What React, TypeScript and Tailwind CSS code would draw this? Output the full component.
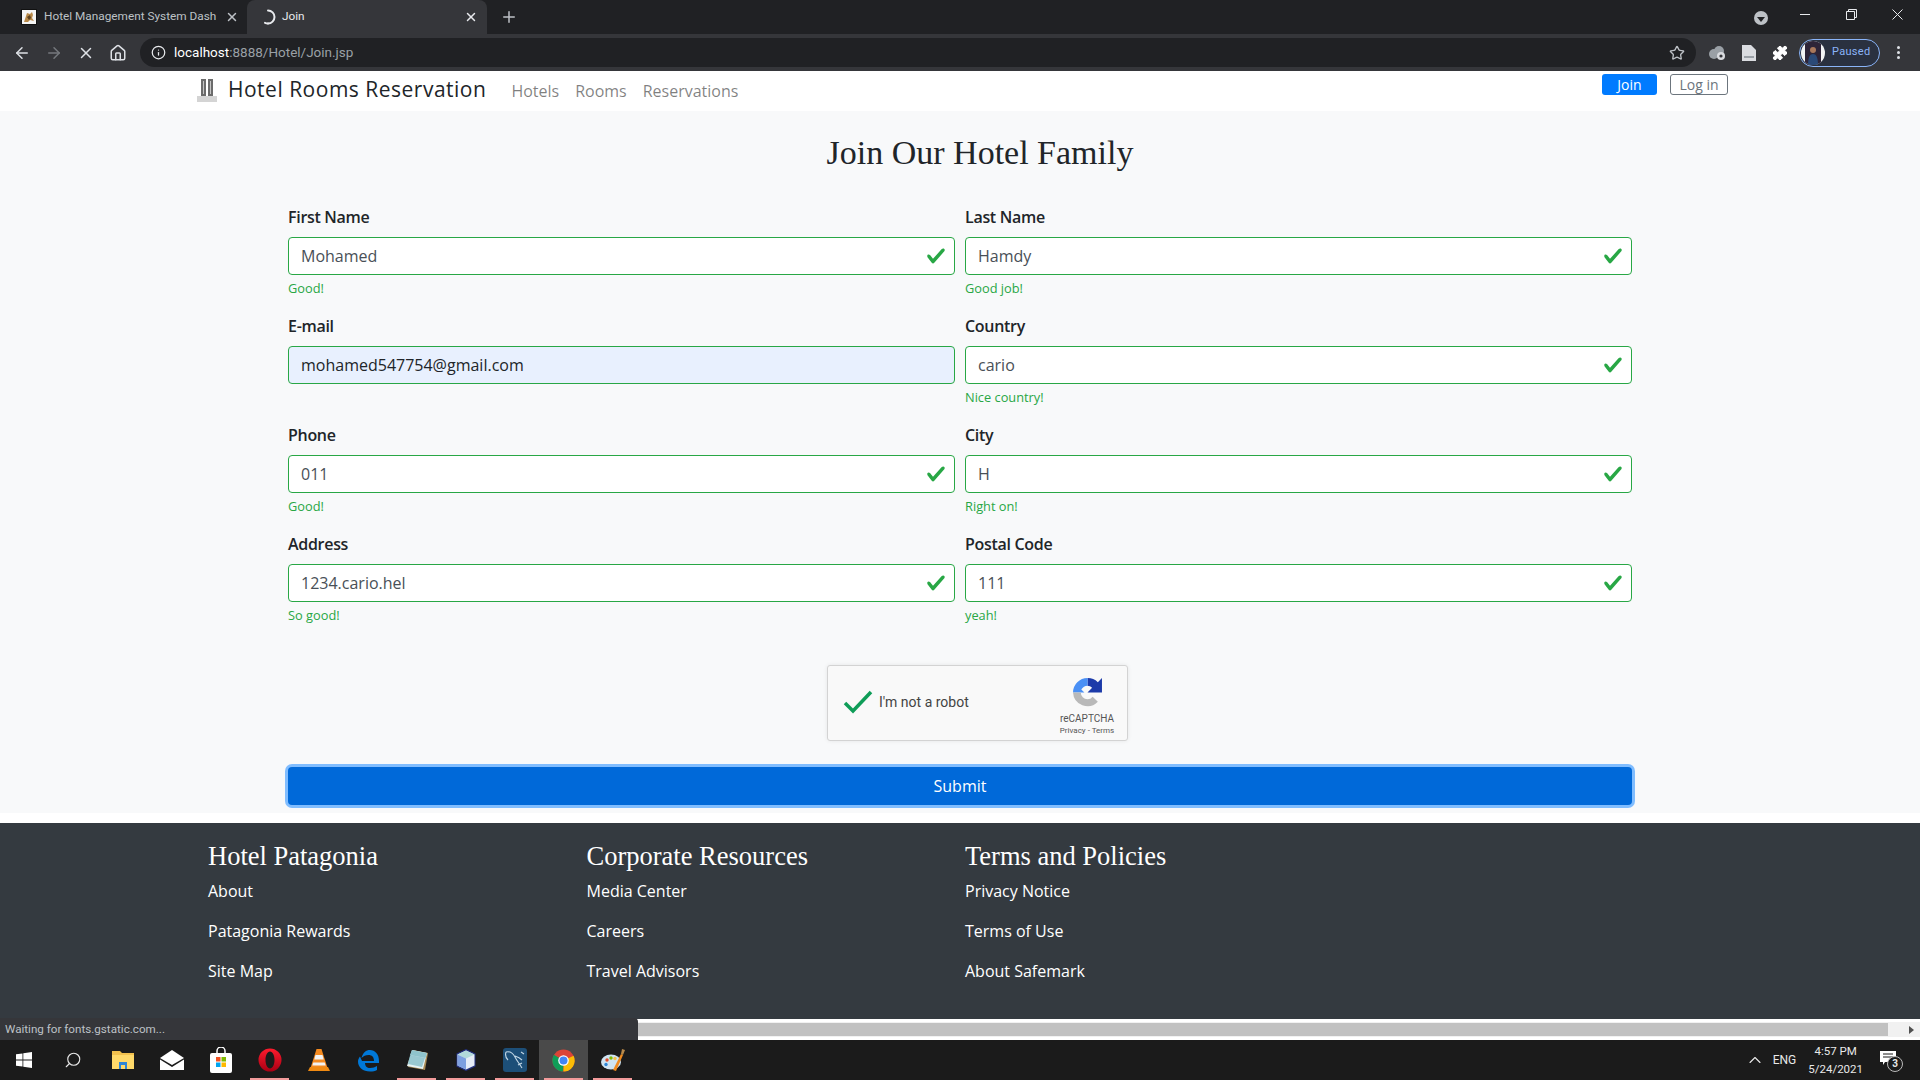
import { ArrowLeft, ArrowRight, ChevronUp, Home as HomeIcon, Info, Plus, Puzzle, Search, Star, X } from 'lucide-react';

const fields = [
  { label: 'First Name', value: 'Mohamed', note: 'Good!' },
  { label: 'Last Name', value: 'Hamdy', note: 'Good job!' },
  { label: 'E-mail', value: 'mohamed547754@gmail.com', note: '', autofill: true },
  { label: 'Country', value: 'cario', note: 'Nice country!' },
  { label: 'Phone', value: '011', note: 'Good!' },
  { label: 'City', value: 'H', note: 'Right on!' },
  { label: 'Address', value: '1234.cario.hel', note: 'So good!' },
  { label: 'Postal Code', value: '111', note: 'yeah!' },
];

const footerColumns = [
  { title: 'Hotel Patagonia', links: ['About', 'Patagonia Rewards', 'Site Map'] },
  { title: 'Corporate Resources', links: ['Media Center', 'Careers', 'Travel Advisors'] },
  { title: 'Terms and Policies', links: ['Privacy Notice', 'Terms of Use', 'About Safemark'] },
];

function ValidCheck() {
  return (
    <svg viewBox="0 0 8 8" className="absolute right-[9px] top-[9px] h-5 w-5 text-[#28a745]">
      <path
        fill="currentColor"
        d="M2.3 6.73L.6 4.53c-.4-1.04.46-1.4 1.1-.8l1.1 1.4 3.4-3.8c.6-.63 1.6-.27 1.2.7l-4 4.6c-.43.5-.8.4-1.1.1z"
      />
    </svg>
  );
}

function Field({ label, value, note, autofill }: { label: string; value: string; note: string; autofill?: boolean }) {
  return (
    <div className="h-[109px]">
      <label className="mb-2 block text-base leading-6 font-semibold tracking-[-0.3px] text-[#212529]">{label}</label>
      <div className="relative h-[38px]">
        <input
          readOnly
          value={value}
          className={`h-[38px] w-full rounded border border-[#28a745] px-3 text-base ${
            autofill ? 'bg-[#e8f0fe] text-[#212529]' : 'bg-white text-[#495057]'
          }`}
        />
        {!autofill && <ValidCheck />}
      </div>
      {note && <div className="mt-1 text-[12.8px] leading-[19px] text-[#28a745]">{note}</div>}
    </div>
  );
}

function Tabs() {
  return (
    <div className="flex h-[34px] items-end bg-[#202124] text-[11.8px] font-['Roboto',sans-serif]">
      <div className="flex h-[34px] w-[247px] items-center pl-[21px] text-[#bdc1c6]">
        <svg viewBox="0 0 16 16" className="h-4 w-4 shrink-0">
          <rect width="16" height="16" fill="#111" />
          <rect x="1" y="1" width="14" height="14" fill="#f5f5f5" />
          <path d="M3 13l2-6 1-3 3 1 2-2 1 3-1 3 2 3-4-1-2 2z" fill="#b98a4a" />
          <path d="M6 8l3-2 1 3-2 2z" fill="#5f4320" />
        </svg>
        <span className="ml-[7px] w-[177px] whitespace-nowrap">Hotel Management System Dash</span>
        <X className="ml-[4px] h-[14px] w-[14px] shrink-0" strokeWidth={2.5} />
      </div>
      <div className="flex h-[34px] w-[240px] items-center rounded-t-lg bg-[#35363a] pl-[13px] text-[#e8eaed]">
        <svg viewBox="0 0 16 16" className="h-4 w-4 shrink-0 text-[#e8eaed]">
          <path d="M8 1.5a6.5 6.5 0 0 1 0 13" fill="none" stroke="currentColor" strokeWidth="2" strokeLinecap="round" />
          <path d="M8 14.5a6.5 6.5 0 0 1-3-.7" fill="none" stroke="currentColor" strokeWidth="2" strokeLinecap="round" />
        </svg>
        <span className="ml-[6px] w-[182px]">Join</span>
        <X className="h-[14px] w-[14px] shrink-0" strokeWidth={2.5} />
      </div>
      <div className="flex h-[34px] w-[44px] items-center justify-center text-[#bdc1c6]">
        <Plus className="h-[18px] w-[18px]" strokeWidth={2} />
      </div>
      <div className="flex-1" />
      <div className="flex h-[34px] items-center text-[#e8eaed]">
        <div className="mt-[2px] mr-[32px] flex h-[14px] w-[14px] items-center justify-center rounded-full bg-[#bdc1c6]">
          <div className="mt-[2px] h-0 w-0 border-x-[4px] border-t-[5px] border-x-transparent border-t-[#202124]" />
        </div>
        <div className="-mt-[6px] mr-[36px] h-px w-[10px] bg-[#e8eaed]" />
        <svg viewBox="0 0 11 11" className="-mt-[6px] mr-[35px] h-[11px] w-[11px]">
          <path d="M.5 2.5h8v8h-8zM2.5 2.5V.5h8v8h-2" fill="none" stroke="currentColor" />
        </svg>
        <svg viewBox="0 0 11 11" className="-mt-[6px] mr-[17px] h-[11px] w-[11px]">
          <path d="M.5.5l10 10M10.5.5l-10 10" fill="none" stroke="currentColor" />
        </svg>
      </div>
    </div>
  );
}

function Toolbar() {
  return (
    <div className="flex h-[37px] items-center bg-[#35363a] text-[#dee1e6]">
      <ArrowLeft className="ml-[13px] h-[18px] w-[18px]" strokeWidth={2} />
      <ArrowRight className="ml-[14px] h-[18px] w-[18px] text-[#75787d]" strokeWidth={2} />
      <X className="ml-[14px] h-[18px] w-[18px]" strokeWidth={2} />
      <HomeIcon className="ml-[14px] h-[18px] w-[18px]" strokeWidth={2} />
      <div className="ml-[13px] flex h-[29px] w-[1556px] items-center rounded-full bg-[#202124] pl-[11px] text-[13.5px] font-['Roboto',sans-serif]">
        <Info className="h-[15px] w-[15px] text-[#e8eaed]" strokeWidth={2} />
        <span className="ml-[8px] text-white">localhost</span>
        <span className="text-[#9aa0a6]">:8888/Hotel/Join.jsp</span>
        <Star className="ml-auto mr-[11px] h-[16px] w-[16px] text-[#bdc1c6]" strokeWidth={2} />
      </div>
      <svg viewBox="0 0 18 18" className="ml-[12px] h-[18px] w-[18px] text-[#9aa0a6]">
        <circle cx="6" cy="10" r="5" fill="currentColor" />
        <circle cx="11" cy="7" r="5" fill="currentColor" />
        <circle cx="13" cy="12" r="4" fill="#dadce0" />
        <circle cx="13" cy="12" r="1.6" fill="#35363a" />
      </svg>
      <svg viewBox="0 0 14 16" className="ml-[16px] h-[16px] w-[14px]">
        <path d="M0 0h9l5 5v11H0z" fill="#dadce0" />
        <rect x="2" y="11" width="10" height="2" fill="#9aa0a6" />
      </svg>
      <Puzzle className="ml-[16px] h-[16px] w-[16px] fill-white text-white" strokeWidth={1.5} />
      <div className="ml-[11px] flex h-[28px] w-[81px] items-center rounded-full border border-[#8ab4f8] bg-[#2a3140] text-[11px] font-['Roboto',sans-serif] text-[#8ab4f8]">
        <svg viewBox="0 0 24 24" className="ml-[1px] h-[24px] w-[24px] rounded-full">
          <rect width="24" height="24" fill="#f1f3f4" />
          <rect x="4" width="16" height="24" fill="#2d2438" />
          <circle cx="12" cy="9" r="3" fill="#a9785c" />
          <path d="M7 24c0-8 2-11 5-11s5 3 5 11z" fill="#2b4a78" />
        </svg>
        <span className="ml-[7px] tracking-[0.3px]">Paused</span>
      </div>
      <div className="ml-[17px] flex flex-col gap-[2px]">
        <div className="h-[3px] w-[3px] rounded-full bg-[#dee1e6]" />
        <div className="h-[3px] w-[3px] rounded-full bg-[#dee1e6]" />
        <div className="h-[3px] w-[3px] rounded-full bg-[#dee1e6]" />
      </div>
    </div>
  );
}

function Navbar() {
  return (
    <div className="flex h-10 items-start bg-white pl-[196px]">
      <svg viewBox="0 0 22 26" className="mt-[7px] h-[26px] w-[22px]">
        <path d="M5 1h5v17H5zM12 1h5v17h-5z" fill="#6b6b6b" />
        <path d="M7 3h1v13H7zM14 3h1v13h-1z" fill="#c4c4c4" />
        <rect x="1" y="18" width="20" height="6" fill="#d4d4d4" />
      </svg>
      <span className="ml-[10px] mt-[1px] text-[21px] leading-[34px] font-medium tracking-[0.5px] text-[#212529]">
        Hotel Rooms Reservation
      </span>
      <div className="ml-[25px] mt-[8px] flex gap-4 text-base leading-6 text-[#00000080]">
        <span>Hotels</span>
        <span>Rooms</span>
        <span>Reservations</span>
      </div>
      <div className="ml-auto mr-[192px] mt-[3px] flex gap-[13px] text-sm">
        <button className="h-[21px] w-[55px] rounded-[3px] bg-[#007bff] leading-[21px] text-white">Join</button>
        <button className="h-[21px] w-[58px] rounded-[3px] border border-[#6c757d] leading-[19px] text-[#6c757d]">Log in</button>
      </div>
    </div>
  );
}

function Recaptcha() {
  return (
    <div className="ml-[539px] mt-6 flex h-[76px] w-[301px] items-center rounded-[3px] border border-[#d3d3d3] bg-[#f9f9f9] shadow-[0_0_4px_rgba(0,0,0,0.08)]">
      <svg viewBox="0 0 30 24" className="-mt-[3px] ml-[15px] h-[24px] w-[30px]">
        <path d="M2 13l8 8L28 2" fill="none" stroke="#0f9d58" strokeWidth="3.5" />
      </svg>
      <span className="-mt-[2px] ml-[6px] text-sm font-['Roboto',sans-serif] text-[#444]">I'm not a robot</span>
      <div className="ml-auto mr-[11px] mt-[8px] flex w-[58px] flex-col items-center font-['Roboto',sans-serif] text-[#555]">
        <svg viewBox="0 0 30 30" className="h-[31px] w-[31px]">
          <path d="M15 1A14 14 0 0 1 25 5l4-4v14H15l4.5-4.5A6.5 6.5 0 0 0 15 8.5z" fill="#1c3aa9" />
          <path d="M15 1A14 14 0 0 0 1 15h11l-3-3a8 8 0 0 1 6-3.5z" fill="#4a90f5" />
          <path d="M1 15h7.5A6.5 6.5 0 0 0 15 21.5 6.5 6.5 0 0 0 20 19l5 5A14 14 0 0 1 1 15z" fill="#b9b9b9" />
        </svg>
        <span className="mt-[5px] text-[10px] leading-3">reCAPTCHA</span>
        <span className="whitespace-nowrap text-[8px] leading-3">Privacy - Terms</span>
      </div>
    </div>
  );
}

function Footer() {
  return (
    <div className="flex h-[196px] bg-[#343a40] pl-[208px] pt-[14px] text-white">
      {footerColumns.map((col) => (
        <div key={col.title} className="w-[378.5px]">
          <h3 className="mb-1 font-['Liberation_Serif',serif] text-[26.5px] leading-[38px]">{col.title}</h3>
          <div className="flex flex-col gap-4">
            {col.links.map((link) => (
              <span key={link} className="text-base leading-6">{link}</span>
            ))}
          </div>
        </div>
      ))}
    </div>
  );
}

function Scrollbar() {
  return (
    <div className="flex h-[21px] items-center bg-white">
      <div className="flex h-[15px] flex-1 items-center bg-[#f1f1f1]">
        <div className="h-[13px] w-[1888px] bg-[#c1c1c1]" />
        <div className="ml-auto mr-[6px] h-0 w-0 border-y-[4px] border-l-[5px] border-y-transparent border-l-[#505050]" />
      </div>
    </div>
  );
}

function TaskIcon({ children, active, marked }: { children: React.ReactNode; active?: boolean; marked?: boolean }) {
  return (
    <div className={`relative flex h-10 w-[49px] items-center justify-center ${active ? 'bg-[#4a4a4a]' : ''}`}>
      {children}
      {marked && <div className="absolute bottom-0 left-[5px] right-[5px] h-[2px] bg-[#f29b9b]" />}
    </div>
  );
}

function Taskbar() {
  return (
    <div className="flex h-10 items-center bg-[#1b1b1b] text-xs font-['Roboto',sans-serif] text-[#e8e8e8]">
      <TaskIcon>
        <svg viewBox="0 0 16 16" className="mr-[2px] h-[16px] w-[16px]">
          <path d="M0 2.3l6.5-.9v6.2H0zM7.3 1.3L16 0v7.6H7.3zM0 8.4h6.5v6.2L0 13.7zM7.3 8.4H16V16l-8.7-1.2z" fill="#fff" />
        </svg>
      </TaskIcon>
      <TaskIcon>
        <Search className="mr-[2px] h-[18px] w-[18px] -scale-x-100" strokeWidth={1.5} />
      </TaskIcon>
      <TaskIcon>
        <svg viewBox="0 0 22 22" className="h-[22px] w-[22px]">
          <path d="M0 2h8l2 2h12v16H0z" fill="#f2c14e" />
          <rect x="0" y="6" width="22" height="14" fill="#ffd96a" />
          <path d="M7 13h8v7h-2v-4H9v4H7z" fill="#2e86d6" />
        </svg>
      </TaskIcon>
      <TaskIcon>
        <svg viewBox="0 0 24 20" className="h-[20px] w-[24px]">
          <path d="M0 8L12 0l12 8-12 7z" fill="#fff" />
          <path d="M0 9.5V20h24V9.5L12 17z" fill="#fff" />
        </svg>
      </TaskIcon>
      <TaskIcon>
        <svg viewBox="0 0 22 26" className="h-[26px] w-[22px]">
          <path d="M7 8V4a4 4 0 0 1 8 0v4" fill="none" stroke="#fff" strokeWidth="1.5" />
          <rect y="6" width="22" height="20" rx="2" fill="#fff" />
          <rect x="6" y="10" width="4.5" height="4.5" fill="#f25022" />
          <rect x="11.5" y="10" width="4.5" height="4.5" fill="#7fba00" />
          <rect x="6" y="15.5" width="4.5" height="4.5" fill="#00a4ef" />
          <rect x="11.5" y="15.5" width="4.5" height="4.5" fill="#ffb900" />
        </svg>
      </TaskIcon>
      <TaskIcon marked>
        <svg viewBox="0 0 24 24" className="h-[24px] w-[24px]">
          <defs>
            <linearGradient id="opera-red" x1="0" y1="0" x2="0" y2="1">
              <stop offset="0" stopColor="#ff1b2d" />
              <stop offset="1" stopColor="#a70014" />
            </linearGradient>
          </defs>
          <path
            fillRule="evenodd"
            fill="url(#opera-red)"
            d="M12 .5a11.5 11.5 0 1 0 0 23 11.5 11.5 0 0 0 0-23zM12 3.5c2.6 0 4.5 3.8 4.5 8.5s-1.9 8.5-4.5 8.5S7.5 16.7 7.5 12 9.4 3.5 12 3.5z"
          />
        </svg>
      </TaskIcon>
      <TaskIcon>
        <svg viewBox="0 0 22 24" className="h-[24px] w-[22px]">
          <path d="M8.5 1h5l6 19H2.5z" fill="#f58a1f" />
          <path d="M7.5 7h7l1.2 4.5H6.3zM5.3 14.5h11.4l1 3H4.3z" fill="#f2f2f2" />
          <path d="M2 19h18l2 4H0z" fill="#f08a12" />
        </svg>
      </TaskIcon>
      <TaskIcon>
        <svg viewBox="0 0 22 24" className="h-[24px] w-[22px]">
          <path d="M5 13h12c0-4-2-6-5.5-6-3 0-5 1-7 3C6 4.5 9 2 13 2c5 0 9 4 9 11v2H8c0 3 2 5 5 5 3 0 5-1 7-2v4c-2 1-4 1.5-7 1.5-7 0-12-4-12-10 0-2 1-4 2-5" fill="#0078d7" />
        </svg>
      </TaskIcon>
      <TaskIcon marked>
        <svg viewBox="0 0 24 24" className="h-[24px] w-[24px]">
          <path d="M8 2l15 3-3 17-17-3z" fill="#a78a55" />
          <path d="M7 2l15 3-4 16L2 18z" fill="#e6f3f4" />
          <path d="M7 2l15 3-1.5 5L5 7z" fill="#8fc4cc" />
          <path d="M5 7l15 3-3 9-14-3z" fill="#5aa6b5" opacity="0.55" />
        </svg>
      </TaskIcon>
      <TaskIcon marked>
        <svg viewBox="0 0 24 24" className="h-[24px] w-[24px]">
          <path d="M12 1l9.5 4.5v13L12 23l-9.5-4.5v-13z" fill="#23307e" />
          <path d="M12 2.5l8.5 4v11L12 21.5l-8.5-4v-11z" fill="#e6ecf7" />
          <path d="M12 2.5l8.5 4-8.5 4-8.5-4z" fill="#b2dadb" />
          <path d="M3.5 6.5l8.5 4v11l-8.5-4z" fill="#7d9fe0" />
        </svg>
      </TaskIcon>
      <TaskIcon marked>
        <svg viewBox="0 0 24 24" className="h-[24px] w-[24px]">
          <rect width="24" height="24" rx="3" fill="#1d4f78" />
          <path d="M3 4c4-1 7 1 9 5s4 6 7 11M3 4c-1 3 0 6 2 8M12 8c3 1 5 2 7 4M18 4l3 2M15 17l4-2" fill="none" stroke="#c4d8e6" strokeWidth="1.1" />
        </svg>
      </TaskIcon>
      <TaskIcon active marked>
        <svg viewBox="0 0 24 24" className="h-[23px] w-[23px]">
          <circle cx="12" cy="12" r="11.5" fill="#db4437" />
          <path d="M12 12L22.5 7A11.5 11.5 0 0 1 12 23.5z" fill="#fbbc05" />
          <path d="M12 12l-.5 11.5A11.5 11.5 0 0 1 2 6z" fill="#0f9d58" />
          <circle cx="12" cy="12" r="5.5" fill="#fff" />
          <circle cx="12" cy="12" r="4.2" fill="#4285f4" />
        </svg>
      </TaskIcon>
      <TaskIcon marked>
        <svg viewBox="0 0 24 24" className="h-[24px] w-[24px]">
          <ellipse cx="10" cy="14" rx="10" ry="7.5" fill="#cfe4f2" />
          <circle cx="6" cy="12" r="1.7" fill="#e34c26" />
          <circle cx="10" cy="10" r="1.7" fill="#7fba00" />
          <circle cx="14" cy="10.5" r="1.7" fill="#f2c14e" />
          <circle cx="5" cy="16.5" r="1.7" fill="#2e86d6" />
          <path d="M12 22l8-16 2 1-7 16z" fill="#ef8a1f" />
          <path d="M20 6l1-5 3 1-2 5z" fill="#b98a4a" />
        </svg>
      </TaskIcon>
      <div className="flex-1" />
      <ChevronUp className="mr-[8px] h-[20px] w-[20px]" strokeWidth={1.3} />
      <span className="mr-[12px]">ENG</span>
      <div className="mr-[17px] flex flex-col items-center text-[11.5px] leading-[18px]">
        <span>4:57 PM</span>
        <span>5/24/2021</span>
      </div>
      <div className="relative mr-[16px] h-[24px] w-[24px]">
        <svg viewBox="0 0 16 14" className="absolute left-0 top-[3px] h-[14px] w-[16px]">
          <path d="M0 0h16v11H5l-2 3v-3H0z" fill="#fff" />
          <path d="M3 3h10M3 6h10" stroke="#1b1b1b" />
        </svg>
        <div className="absolute left-[7px] top-[8px] flex h-[16px] w-[16px] items-center justify-center rounded-full border border-[#bbb] bg-[#1b1b1b] text-[10px] font-bold">3</div>
      </div>
    </div>
  );
}

export default function App() {
  return (
    <div className="relative flex h-screen w-full flex-col overflow-hidden bg-white font-['Open_Sans',sans-serif]">
      <Tabs />
      <Toolbar />
      <Navbar />

      <main className="h-[702px] bg-[#f8f9fa]">
        <h1 className="ml-[40px] pt-[18px] text-center font-['Liberation_Serif',serif] text-[34px] leading-[48px] text-[#212529]">
          Join Our Hotel Family
        </h1>
        <div className="ml-[288px] mt-[28px] w-[1344px]">
          <div className="grid grid-cols-2 gap-x-[10px]">
            {fields.map((f) => (
              <Field key={f.label} {...f} />
            ))}
          </div>
          <Recaptcha />
          <button className="mt-[26px] h-[38px] w-full rounded bg-[#0069d9] text-base text-white ring-[3px] ring-[#80bdff]">
            Submit
          </button>
        </div>
      </main>
      <div className="h-[10px] bg-white" />

      <Footer />
      <Scrollbar />
      <Taskbar />

      <div className="absolute bottom-10 left-0 flex h-[22px] w-[638px] items-center rounded-tr bg-[#35363a] pl-[5px] pt-[2px] font-['Roboto',sans-serif] text-[11.65px] text-[#bdc1c6]">
        Waiting for fonts.gstatic.com...
      </div>
    </div>
  );
}
